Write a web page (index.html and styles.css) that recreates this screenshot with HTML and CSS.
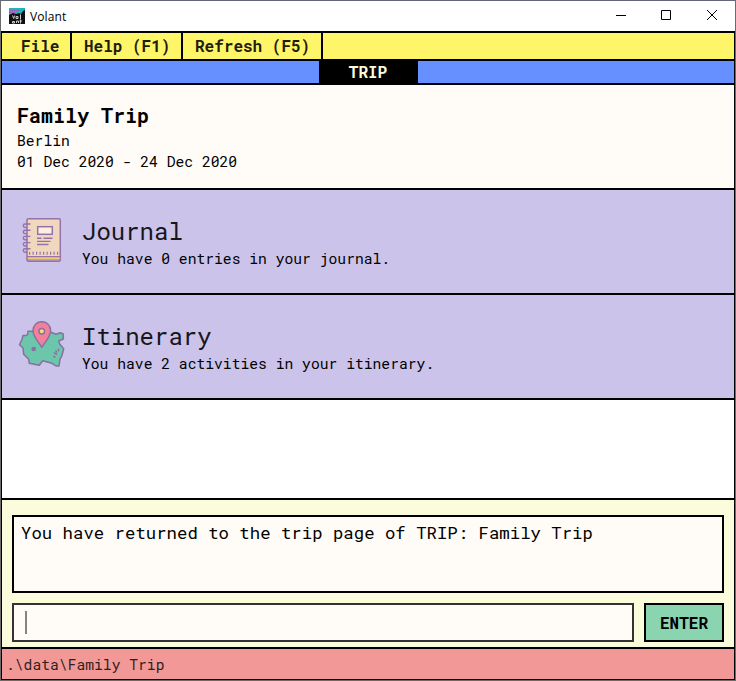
FILE: index.html
```
<!DOCTYPE html>
<html lang="en">
<head>
<meta charset="utf-8">
<title>Volant</title>
<link rel="stylesheet" href="styles.css">
</head>
<body>
<div class="window">
  <header class="titlebar">
    <svg class="app-icon" width="16" height="16" viewBox="0 0 16 16">
      <rect width="16" height="16" fill="#111"/>
      <path d="M0 0h16v2l-2 1-2 3-2-1-3 1-3-1-4 2z" fill="#18b9b5"/>
      <path d="M0 2.500h10M0 4.500h6" stroke="#9a5fc0" stroke-width="1"/>
      <path d="M3.500 7.500l1.200 3 1-3M7 8.500h2v2H7zM11.500 6.500v4.500M3.500 13.500h2V15h-2zM7.500 15v-2H9.500V15M11.500 11.500v4M10.500 13h2.500" fill="none" stroke="#ccc" stroke-width="1"/>
    </svg>
    <span class="app-name">Volant</span>
    <svg class="controls" width="104" height="12" viewBox="0 0 104 12" fill="none" stroke="#000">
      <path d="M0 6.500h10M45.500 1.500h9v9h-9z"/>
      <path d="M91 1l10 10M101 1l-10 10"/>
    </svg>
  </header>
  <nav class="menu">
    <span class="menu-item file">File</span>
    <span class="menu-item help">Help (F1)</span>
    <span class="menu-item refresh">Refresh (F5)</span>
  </nav>
  <div class="mode"><span class="mode-name">TRIP</span></div>
  <section class="summary">
    <h1>Family Trip</h1>
    <p>Berlin</p>
    <p>01 Dec 2020 - 24 Dec 2020</p>
  </section>
  <section class="card">
    <svg class="card-icon" width="48" height="48" viewBox="0 0 48 48" fill="none" stroke="#9672a8" stroke-width="1.500">
      <rect x="9" y="2.700" width="33.300" height="42.600" rx="1.500" fill="#f0d8be"/>
      <path d="M10 42.300h31.500" stroke="#eccb70" stroke-width="2"/>
      <path d="M9 40.700h33M9 44h33" stroke-width="1.200"/>
      <path d="M11 37.300h31" stroke-width="3" stroke-dasharray="1.200 2.300"/>
      <rect x="19.700" y="10.700" width="14.600" height="7.600" fill="#fbf0df"/>
      <path d="M19 22.300h4.500M25.500 22.300h9M19 25.400h13.500M19 28.500h11.500" stroke-width="1.400"/>
      <path d="M12.500 8H7a1.700 1.700 0 0 0 0 3.400h2M12.500 14.200H7a1.700 1.700 0 0 0 0 3.400h2M12.500 20.400H7a1.700 1.700 0 0 0 0 3.400h2M12.500 26.600H7a1.700 1.700 0 0 0 0 3.400h2M12.500 32.800H7a1.700 1.700 0 0 0 0 3.400h2" stroke-width="1.400"/>
    </svg>
    <div class="card-text"><h2>Journal</h2><p>You have 0 entries in your journal.</p></div>
  </section>
  <section class="card">
    <svg class="card-icon" width="48" height="48" viewBox="0 0 48 48" fill="none" stroke="#86719f" stroke-width="1.500" stroke-linejoin="round" stroke-linecap="round">
      <path d="M12 10.300h-2l-.3 3-1.700 1.200H5l-1 3.800-2.500 5.400L5 27l.7 6.300 5 5 .6 4 10 2 3.400-4.600 9.300 2.600 4 2.700h3l1-6.700 2-4 1.700-6.600-4-4.700-1-3 4.600-2V13l-3-1.300-4.300 1.600-5.700-2.300z" fill="#6bc6ac"/>
      <path d="M23.800 26.300C20.500 20.500 15 16 15 9.500a8.800 8.800 0 0 1 17.600 0C32.600 16 27.500 20.500 23.800 26.300z" fill="#f47f9c"/>
      <circle cx="23.800" cy="10.300" r="2.800" fill="#f8d982"/>
      <circle cx="15.700" cy="28" r="2.300" fill="#86719f" stroke="none"/>
      <path d="M40.500 28.300v1.500M38 30l.5 1M36.500 32l2 1.200M35.800 35.500l1.200.5"/>
    </svg>
    <div class="card-text"><h2>Itinerary</h2><p>You have 2 activities in your itinerary.</p></div>
  </section>
  <div class="blank"></div>
  <section class="console">
    <div class="result">You have returned to the trip page of TRIP: Family Trip</div>
    <div class="command">
      <div class="field"><span class="caret"></span></div>
      <div class="enter">ENTER</div>
    </div>
  </section>
  <footer class="status">.\data\Family Trip</footer>
</div>
</body>
</html>
```
FILE: styles.css
```
* { box-sizing: border-box; }
body { margin: 0; background: #6e6e6e; color: #000; }
h1, h2, p { margin: 0; font-weight: 400; }

.window {
  width: 736px;
  height: 681px;
  border: 1px solid #6b6b6b;
  border-top-color: #63667a;
  display: flex;
  flex-direction: column;
  background: #000;
  font-family: "Roboto Mono", "DejaVu Sans Mono", monospace;
  font-size: 14.680px;
}
.titlebar {
  height: 30px;
  background: #fff;
  display: flex;
  align-items: center;
  padding: 0 15px 0 8px;
  font: 12px "Open Sans", sans-serif;
}
.app-icon { margin-right: 5px; margin-bottom: 1px; }
.app-name { letter-spacing: 0.1px; }
.controls { margin-left: auto; margin-bottom: 2px; }

.menu, .mode, .summary, .card, .blank, .console, .status { margin: 0 1px; }
.menu {
  height: 26px;
  margin-top: 2px;
  background: #fff568;
  display: flex;
  font-size: 16px;
  font-weight: 700;
  line-height: 25px;
  color: #1f1e0d;
}
.menu-item { border-right: 2px solid #000; padding-left: 12px; white-space: nowrap; }
.file { width: 70px; padding-left: 19px; }
.help { width: 111px; }
.refresh { width: 140px; }

.mode { height: 22px; margin-top: 2px; background: #6690ff; display: flex; justify-content: center; }
.mode-name {
  width: 99px;
  background: #000;
  color: #fcfcdc;
  text-align: center;
  font-size: 16px;
  font-weight: 700;
  line-height: 21px;
}
.summary { height: 103px; margin-top: 2px; background: #fffbf7; padding: 16px 15px; line-height: 21px; }
.summary h1 { font-size: 20px; font-weight: 700; line-height: 28px; margin-bottom: 1px; }
.card { height: 103px; margin-top: 2px; background: #cbc3ea; display: flex; align-items: center; padding: 0 16px; }
.card-text { margin-left: 16px; line-height: 22px; }
.card h2 { font-size: 24px; line-height: 32px; color: #17161b; }
.card p { padding-top: 1px; margin-bottom: -1px; }
.card-icon { flex: none; margin-top: -3px; }
.blank { height: 98px; margin-top: 2px; background: #fff; }
.console { height: 147px; margin-top: 2px; background: #fbfcdc; padding: 15px 10px 5px; }
.result { height: 78px; border: 2px solid #000; background: #fffbf7; padding: 3px 7px; font-size: 17.333px; line-height: 25px; }
.command { display: flex; gap: 10px; height: 39px; margin-top: 10px; }
.field { flex: 1; border: 2px solid #333; background: #fffbf7; padding: 6px 11px; }
.caret { display: block; width: 2px; height: 23px; background: #858280; }
.enter {
  width: 80px;
  border: 2px solid #000;
  background: #8ad5b0;
  text-align: center;
  font-size: 16px;
  font-weight: 700;
  line-height: 36px;
}
.status { height: 30px; margin-top: 2px; background: #f29998; padding-left: 4px; line-height: 31px; color: #301f1e; }
```
